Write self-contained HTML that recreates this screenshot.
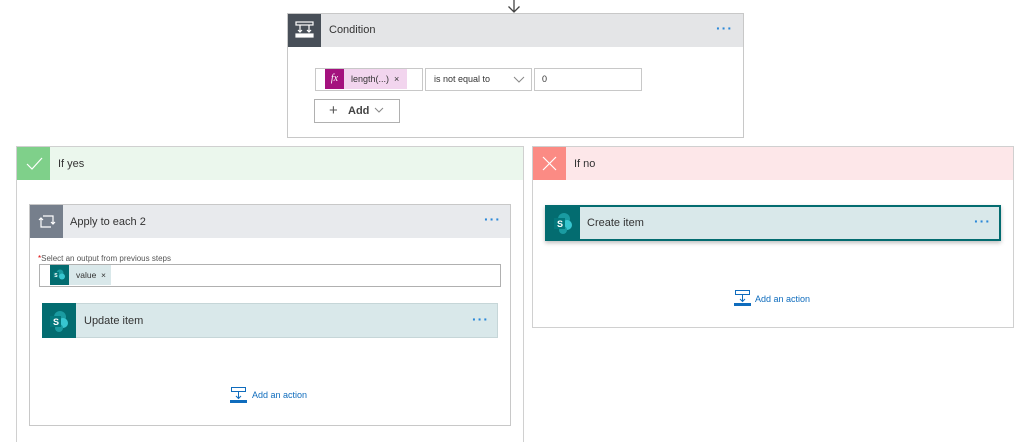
<!DOCTYPE html>
<html style="width:1024px;height:442px;overflow:hidden"><head><style>
*{box-sizing:border-box;margin:0;padding:0}
body{width:1024px;height:442px;background:#fff;font-family:"Liberation Sans",sans-serif;position:relative;overflow:hidden;color:#333}
.abs{position:absolute}
.t{font-size:11px}
.dots{position:absolute;color:#2b88d8;font-size:14px;letter-spacing:1px;font-weight:bold}
.sp{position:absolute;background:#036c70}
</style></head><body>
<svg class="abs" style="left:507px;top:0" width="14" height="14"><path d="M7 0V12M1.5 6.5L7 12L12.5 6.5" stroke="#444" stroke-width="1.3" fill="none"/></svg>
<div class="abs" style="left:287px;top:13px;width:457px;height:125px;border:1px solid #c8c8c8;background:#fff"></div>
<div class="abs" style="left:288px;top:14px;width:455px;height:33px;background:#e4e5e7"></div>
<div class="abs" style="left:288px;top:14px;width:33px;height:33px;background:#484f58"></div>
<svg class="abs" style="left:294px;top:20px" width="21" height="21"><g stroke="#fff" fill="none" stroke-width="1.2"><rect x="2" y="2" width="17" height="3"/><path d="M6 5V12M15 5V12M4 10L6 12L8 10M13 10L15 12L17 10"/><rect x="2" y="14" width="8" height="3" fill="#fff"/><rect x="11" y="14" width="8" height="3" fill="#fff"/></g></svg>
<div class="abs t" style="left:329px;top:24px">Condition</div>
<div class="dots" style="left:716px;top:20px">···</div>
<div class="abs" style="left:315px;top:68px;width:108px;height:23px;border:1px solid #c8c8c8"></div>
<div class="abs" style="left:325px;top:69px;width:82px;height:20px;background:#f2d5ee"></div>
<div class="abs" style="left:325px;top:69px;width:19px;height:20px;background:#a4117e;color:#fff;font-size:10px;font-style:italic;font-family:'Liberation Serif',serif;text-align:center;line-height:20px">fx</div>
<div class="abs" style="left:351px;top:74px;font-size:9px">length(...) &nbsp;×</div>
<div class="abs" style="left:425px;top:68px;width:107px;height:23px;border:1px solid #c8c8c8"></div>
<div class="abs" style="left:434px;top:74px;font-size:9px">is not equal to</div>
<svg class="abs" style="left:513px;top:76px" width="12" height="8"><path d="M1 1L6 6L11 1" stroke="#888" fill="none"/></svg>
<div class="abs" style="left:534px;top:68px;width:108px;height:23px;border:1px solid #c8c8c8"></div>
<div class="abs" style="left:542px;top:74px;font-size:9px">0</div>
<div class="abs" style="left:314px;top:99px;width:86px;height:24px;border:1px solid #b0b0b0"></div>
<div class="abs" style="left:329px;top:102px;font-size:15px;color:#555">+</div>
<div class="abs" style="left:348px;top:105px;font-size:11px;font-weight:bold;color:#444">Add</div>
<svg class="abs" style="left:374px;top:107px" width="10" height="7"><path d="M1 1L5 5L9 1" stroke="#888" fill="none"/></svg>
<div class="abs" style="left:16px;top:146px;width:508px;height:296px;border:1px solid #d0d0d0;border-bottom:none"></div>
<div class="abs" style="left:17px;top:147px;width:506px;height:33px;background:#ebf7ed"></div>
<div class="abs" style="left:17px;top:147px;width:33px;height:33px;background:#7fd08a"></div>
<svg class="abs" style="left:24px;top:154px" width="20" height="20"><path d="M3 10L8 15L18 4" stroke="#fff" stroke-width="1.2" fill="none"/></svg>
<div class="abs t" style="left:58px;top:158px">If yes</div>
<div class="abs" style="left:29px;top:204px;width:482px;height:222px;border:1px solid #c8c8c8"></div>
<div class="abs" style="left:30px;top:205px;width:480px;height:33px;background:#e8eaed"></div>
<div class="abs" style="left:30px;top:205px;width:33px;height:33px;background:#767f8c"></div>
<svg class="abs" style="left:38px;top:213px" width="18" height="17"><path d="M3 5V14H13M15 11V3H5M1 7L3 5L5 7M13 9L15 11L17 9" stroke="#fff" stroke-width="1.2" fill="none"/></svg>
<div class="abs t" style="left:70px;top:216px">Apply to each 2</div>
<div class="dots" style="left:484px;top:211px">···</div>
<div class="abs" style="left:38px;top:254px;font-size:8px;color:#555"><span style="color:#d00">*</span>Select an output from previous steps</div>
<div class="abs" style="left:39px;top:264px;width:462px;height:23px;border:1px solid #b0b0b0"></div>
<div class="abs" style="left:50px;top:265px;width:61px;height:20px;background:#d9e8ea"></div>
<div class="sp" style="left:50px;top:265px;width:19px;height:20px"></div>
<svg class="abs" style="left:52px;top:268px" width="14" height="14"><circle cx="8" cy="5" r="3.5" fill="#1a9ba1"/><circle cx="10" cy="8.5" r="3" fill="#37c6d0"/><rect x="1" y="4" width="6" height="6" fill="#03787c"/><text x="2.3" y="9" fill="#fff" font-size="5" font-weight="bold" font-family="Liberation Sans">S</text></svg>
<div class="abs" style="left:76px;top:270px;font-size:8.5px">value &nbsp;×</div>
<div class="abs" style="left:42px;top:303px;width:456px;height:35px;background:#d9e8ea;border:1px solid #c6d6d8"></div>
<div class="sp" style="left:42px;top:303px;width:34px;height:35px"></div>
<svg class="abs" style="left:47px;top:309px" width="24" height="24"><circle cx="13" cy="8" r="6" fill="#1a9ba1"/><circle cx="16" cy="14" r="5" fill="#37c6d0"/><circle cx="12" cy="19" r="4" fill="#1a9ba1"/><rect x="3" y="7" width="11" height="11" fill="#03787c"/><text x="6" y="16" fill="#fff" font-size="9" font-weight="bold" font-family="Liberation Sans">S</text></svg>
<div class="abs t" style="left:84px;top:315px">Update item</div>
<div class="dots" style="left:472px;top:311px">···</div>
<svg class="abs" style="left:230px;top:387px" width="17" height="16"><rect x="1.5" y="0.5" width="14" height="4" fill="none" stroke="#0f6cbd"/><path d="M8.5 5V11M6 9L8.5 11.5L11 9" stroke="#0f6cbd" fill="none"/><rect x="0" y="13" width="17" height="3" fill="#0f6cbd"/></svg>
<div class="abs" style="left:252px;top:390px;font-size:9px;color:#0f6cbd">Add an action</div>
<div class="abs" style="left:532px;top:146px;width:482px;height:182px;border:1px solid #d0d0d0"></div>
<div class="abs" style="left:533px;top:147px;width:480px;height:33px;background:#fde7e9"></div>
<div class="abs" style="left:533px;top:147px;width:33px;height:33px;background:#fb8b84"></div>
<svg class="abs" style="left:541px;top:155px" width="17" height="17"><path d="M2 2L15 15M15 2L2 15" stroke="#fff" stroke-width="1.2"/></svg>
<div class="abs t" style="left:574px;top:158px">If no</div>
<div class="abs" style="left:545px;top:205px;width:456px;height:36px;background:#d9e8ea;border:2px solid #036c70;box-shadow:0 2px 4px rgba(0,0,0,.25)"></div>
<div class="sp" style="left:545px;top:205px;width:35px;height:36px"></div>
<svg class="abs" style="left:551px;top:211px" width="24" height="24"><circle cx="13" cy="8" r="6" fill="#1a9ba1"/><circle cx="16" cy="14" r="5" fill="#37c6d0"/><circle cx="12" cy="19" r="4" fill="#1a9ba1"/><rect x="3" y="7" width="11" height="11" fill="#03787c"/><text x="6" y="16" fill="#fff" font-size="9" font-weight="bold" font-family="Liberation Sans">S</text></svg>
<div class="abs t" style="left:587px;top:217px">Create item</div>
<div class="dots" style="left:974px;top:213px">···</div>
<svg class="abs" style="left:734px;top:290px" width="17" height="16"><rect x="1.5" y="0.5" width="14" height="4" fill="none" stroke="#0f6cbd"/><path d="M8.5 5V11M6 9L8.5 11.5L11 9" stroke="#0f6cbd" fill="none"/><rect x="0" y="13" width="17" height="3" fill="#0f6cbd"/></svg>
<div class="abs" style="left:755px;top:294px;font-size:9px;color:#0f6cbd">Add an action</div>
</body></html>
